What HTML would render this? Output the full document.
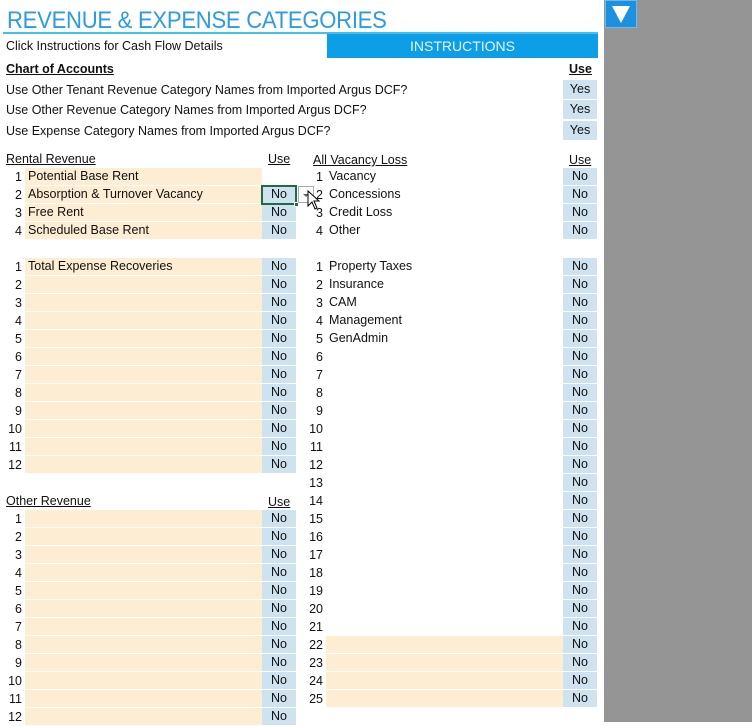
<!DOCTYPE html>
<html><head><meta charset="utf-8"><style>
body{margin:0;width:752px;height:722px;overflow:hidden;background:#fff;position:relative;font-family:"Liberation Sans",sans-serif;font-size:12.5px;color:#111}
div{position:absolute;box-sizing:border-box}
.gray{left:604px;top:0;width:148px;height:722px;background:#959595}
.t{left:7px;top:7px;font-size:24px;color:#2e9be0;letter-spacing:-0.3px;transform:scaleX(0.92);transform-origin:left}
.line{left:3px;top:32px;width:595px;height:2px;background:#44c0ee}
.ins{left:327px;top:34px;width:271px;height:24px;background:#0d9ee8;color:#e8f6ff;font-size:14px;text-align:center;line-height:24px}
.l{line-height:18px;white-space:nowrap}
.u{text-decoration:underline}
.yes{left:563px;width:34px;height:19px;background:#cfe2f0;text-align:center;line-height:19px}
.n{width:22px;text-align:right;height:18px;line-height:18px}
.b{height:17px;background:#fdedd3;line-height:17px;padding-left:3px}
.c{height:17px;background:#cfe2f0;text-align:center;line-height:17px}
.rt{line-height:18px}
</style></head><body>
<div class="gray"></div>
<div style="left:605px;top:0;width:32px;height:28px;background:#1e90e0;border:1px solid #6fb8f0"><svg width="30" height="26"><polygon points="6,5 24,5 15,22" fill="#fff"/></svg></div>
<div class="t">REVENUE &amp; EXPENSE CATEGORIES</div>
<div class="line"></div>
<div class="l" style="left:6px;top:37px">Click Instructions for Cash Flow Details</div>
<div class="ins">INSTRUCTIONS</div>
<div class="l u" style="left:6px;top:60px;font-weight:bold">Chart of Accounts</div>
<div class="l u" style="left:569px;top:60px;font-weight:bold">Use</div>
<div class="l" style="left:6px;top:81px">Use Other Tenant Revenue Category Names from Imported Argus DCF?</div>
<div class="l" style="left:6px;top:101px">Use Other Revenue Category Names from Imported Argus DCF?</div>
<div class="l" style="left:6px;top:122px">Use Expense Category Names from Imported Argus DCF?</div>
<div class="yes" style="top:80px">Yes</div><div class="yes" style="top:100px">Yes</div><div class="yes" style="top:121px">Yes</div>

<div class="l u" style="left:6px;top:150px">Rental Revenue</div>
<div class="l u" style="left:268px;top:150px">Use</div>
<div class="l u" style="left:313px;top:151px">All Vacancy Loss</div>
<div class="l u" style="left:569px;top:151px">Use</div>
<div class="l u" style="left:6px;top:492px">Other Revenue</div>
<div class="l u" style="left:268px;top:493px">Use</div>

<div id="rows"></div>
<script>
var h='';
function L(top,n,txt,blue,beige){h+='<div class="n" style="left:0;top:'+top+'px">'+n+'</div>';
 if(beige!==false)h+='<div class="b" style="left:25px;width:237px;top:'+top+'px">'+(txt||'')+'</div>';
 if(blue!==false)h+='<div class="c" style="left:262px;width:34px;top:'+top+'px">No</div>';}
function R(top,n,txt,beige){h+='<div class="n" style="left:301px;top:'+top+'px">'+n+'</div>';
 if(beige)h+='<div class="b" style="left:326px;width:237px;top:'+top+'px"></div>';
 else if(txt)h+='<div class="rt" style="left:329px;top:'+(top-1)+'px">'+txt+'</div>';
 h+='<div class="c" style="left:563px;width:34px;top:'+top+'px">No</div>';}
var rr=['Potential Base Rent','Absorption &amp; Turnover Vacancy','Free Rent','Scheduled Base Rent'];
for(var i=0;i<4;i++)L(168+18*i,i+1,rr[i],i!=0);
var vl=['Vacancy','Concessions','Credit Loss','Other'];
for(i=0;i<4;i++)R(168+18*i,i+1,vl[i]);
for(i=0;i<12;i++)L(258+18*i,i+1,i==0?'Total Expense Recoveries':'');
for(i=0;i<12;i++)L(510+18*i,i+1,'');
var ex=['Property Taxes','Insurance','CAM','Management','GenAdmin'];
for(i=0;i<25;i++)R(258+18*i,i+1,ex[i],i>=21);
document.getElementById('rows').outerHTML=h;
</script>
<div style="left:261px;top:185px;width:36px;height:20px;border:2px solid #1f6b47"></div>
<div style="left:294px;top:202px;width:5px;height:5px;background:#1f6b47;border:1px solid #fff"></div>
<div style="left:298px;top:186px;width:16px;height:17px;border:1px solid #aaa;background:#fff"><svg width="14" height="15"><polygon points="4,7 10,7 7,10" fill="#666"/></svg></div>
<div style="left:307px;top:190px"><svg width="14" height="22"><path d="M1,1 L1,16 L5,12 L8,19 L10,18 L7,11 L12,11 Z" fill="#fff" stroke="#000" stroke-width="1"/></svg></div>
</body></html>
